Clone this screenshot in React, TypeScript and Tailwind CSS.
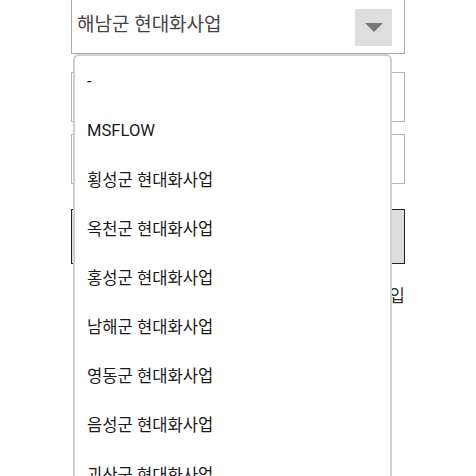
import React from "react";

const OPTIONS = [
  "-",
  "MSFLOW",
  "횡성군 현대화사업",
  "옥천군 현대화사업",
  "홍성군 현대화사업",
  "남해군 현대화사업",
  "영동군 현대화사업",
  "음성군 현대화사업",
  "괴산군 현대화사업",
  "청양군 현대화사업",
];

export default function App() {
  return (
    <div
      className="relative h-[476px] w-[476px] overflow-hidden bg-white"
      style={{ fontFamily: 'Roboto, "Noto Sans CJK KR", sans-serif' }}
    >
      <div className="mx-auto -mt-[6px] flex w-[334px] flex-col">
        {/* Select */}
        <div className="flex h-[60px] items-center justify-between border border-[#a8a8a8] pl-[5px] pr-[12px]">
          <span className="mt-[2px] text-[19px] text-[#444]">해남군 현대화사업</span>
          <div className="mt-[6px] flex h-[37px] w-[37px] items-center justify-center bg-[#dedede]">
            <svg width="18" height="9" viewBox="0 0 18 9">
              <polygon points="0,0 18,0 9,9" fill="#777" />
            </svg>
          </div>
        </div>

        <div className="mt-[18px] h-[50px] border border-[#b5b5b5]" />
        <div className="mt-[12px] h-[50px] border border-[#b5b5b5]" />
        <div className="mt-[25px] h-[55px] border border-[#222] bg-[#dddddd]" />
        <div className="mt-[20px] text-right text-[17px] text-[#333]">회원가입</div>
      </div>

      {/* Open dropdown menu */}
      <div className="absolute left-[73px] top-[54px] w-[319px] rounded-t-[6px] border-2 border-b-0 border-[#cfcfcf] bg-white pt-[2px]">
        {OPTIONS.map((o) => (
          <div key={o} className="flex h-[49.2px] items-center pl-[12px] text-[16.6px] text-[#1a1a1a]">
            {o}
          </div>
        ))}
      </div>
    </div>
  );
}
